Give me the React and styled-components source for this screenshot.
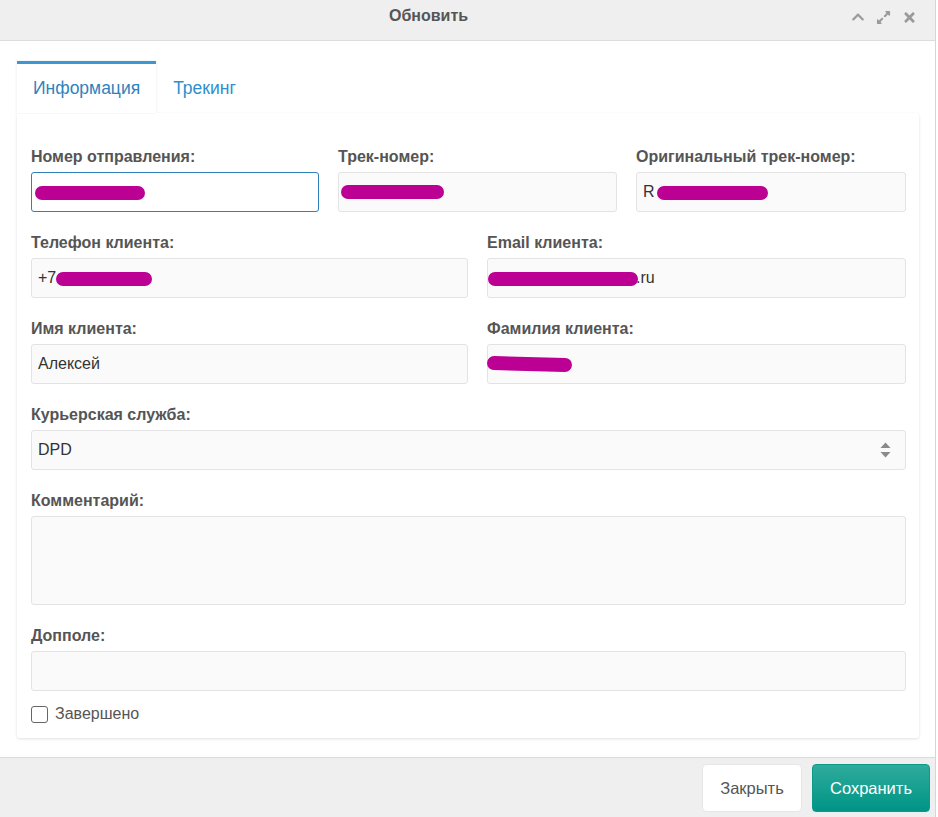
import React from "react";
import styled, { createGlobalStyle } from "styled-components";
import { FaChevronUp, FaExpandAlt, FaTimes } from "react-icons/fa";

const GlobalStyle = createGlobalStyle`
  body {
    margin: 0;
    background: #fff;
    font-family: "Liberation Sans", Arial, sans-serif;
  }
`;

function Field({ label, children }) {
  return (
    <Group>
      <Label>{label}</Label>
      {children}
    </Group>
  );
}

function App() {
  return (
    <>
      <GlobalStyle />
      <Dialog>
        <Header>
          <Title>Обновить</Title>
          <HeaderIcons>
            <FaChevronUp size={14} />
            <FaExpandAlt size={15} />
            <FaTimes size={15} />
          </HeaderIcons>
        </Header>

        <Body>
          <Tabs>
            <Tab active>Информация</Tab>
            <Tab>Трекинг</Tab>
          </Tabs>

          <Panel>
            <Row cols="288px 279px 1fr">
              <Field label="Номер отправления:">
                <Input focused>
                  <Redact left={3} top={13} width={110} />
                </Input>
              </Field>
              <Field label="Трек-номер:">
                <Input>
                  <Redact left={2} top={12} width={103} />
                </Input>
              </Field>
              <Field label="Оригинальный трек-номер:">
                <Input>
                  R
                  <Redact left={20} top={13} width={111} />
                </Input>
              </Field>
            </Row>

            <Row cols="437px 1fr">
              <Field label="Телефон клиента:">
                <Input>
                  +7
                  <Redact left={24} top={13} width={96} />
                </Input>
              </Field>
              <Field label="Email клиента:">
                <Input>
                  <Spacer width={142} />
                  .ru
                  <Redact left={0} top={13} width={150} />
                </Input>
              </Field>
            </Row>

            <Row cols="437px 1fr">
              <Field label="Имя клиента:">
                <Input>Алексей</Input>
              </Field>
              <Field label="Фамилия клиента:">
                <Input>
                  <Redact left={-1} top={12} width={85} tilt />
                </Input>
              </Field>
            </Row>

            <Field label="Курьерская служба:">
              <Select>
                DPD
                <SelectArrows>
                  <svg width="11" height="16" viewBox="0 0 11 16">
                    <path d="M5.5 0.5 L10.5 6 H0.5 Z" fill="#8a8a8a" />
                    <path d="M5.5 15.5 L10.5 10 H0.5 Z" fill="#8a8a8a" />
                  </svg>
                </SelectArrows>
              </Select>
            </Field>

            <Field label="Комментарий:">
              <TextArea />
            </Field>

            <Field label="Допполе:">
              <Input />
            </Field>

            <CheckRow>
              <CheckBox />
              Завершено
            </CheckRow>
          </Panel>
        </Body>

        <Footer>
          <Button>Закрыть</Button>
          <Button primary>Сохранить</Button>
        </Footer>
      </Dialog>
    </>
  );
}

const Dialog = styled.div`
  width: 935px;
  height: 817px;
  display: flex;
  flex-direction: column;
  border-right: 1px solid #d6d6d6;
  background: #fff;
`;

const Header = styled.div`
  height: 40px;
  flex-shrink: 0;
  background: #efefef;
  border-bottom: 1px solid #dcdcdc;
  display: flex;
  align-items: center;
  justify-content: center;
  padding-right: 78px;
  position: relative;
`;

const Title = styled.div`
  font-size: 16px;
  font-weight: bold;
  color: #555;
  margin-top: -8px;
`;

const HeaderIcons = styled.div`
  position: absolute;
  right: 18px;
  top: 10px;
  display: flex;
  gap: 11px;
  color: #9a9a9a;
`;

const Body = styled.div`
  flex: 1;
  min-height: 0;
  padding: 20px 16px 18px 17px;
  display: flex;
  flex-direction: column;
`;

const Tabs = styled.div`
  display: flex;
  height: 52px;
`;

const Tab = styled.div`
  box-sizing: border-box;
  height: 52px;
  padding: 0 16px 0 ${({ active }) => (active ? "16px" : "17px")};
  display: flex;
  align-items: center;
  font-size: 17.5px;
  color: ${({ active }) => (active ? "#2f83bd" : "#2d8fd0")};
  background: ${({ active }) => (active ? "#fff" : "transparent")};
  border-top: 3px solid ${({ active }) => (active ? "#3a97d3" : "transparent")};
  box-shadow: ${({ active }) =>
    active ? "1px 0 2px rgba(0,0,0,0.05), -1px 0 2px rgba(0,0,0,0.05)" : "none"};
  position: relative;
  z-index: 1;
`;

const Panel = styled.div`
  background: #fff;
  border-radius: 0 3px 3px 3px;
  box-shadow: 0 1px 3px rgba(0, 0, 0, 0.12);
  padding: 33px 13px 13px 14px;
`;

const Row = styled.div`
  display: grid;
  grid-template-columns: ${({ cols }) => cols};
  column-gap: 19px;
`;

const Group = styled.div`
  margin-bottom: 20px;
`;

const Label = styled.div`
  font-size: 16px;
  line-height: 21px;
  font-weight: bold;
  color: #555;
  margin-bottom: 5px;
`;

const Input = styled.div`
  box-sizing: border-box;
  height: 40px;
  position: relative;
  display: flex;
  align-items: center;
  padding: 0 6px;
  font-size: 16px;
  color: #333;
  background: ${({ focused }) => (focused ? "#fff" : "#fafafa")};
  border: 1px solid ${({ focused }) => (focused ? "#2f7fba" : "#e3e3e3")};
  border-radius: 3px;
`;

const Spacer = styled.span`
  display: inline-block;
  width: ${({ width }) => width}px;
`;

const Redact = styled.span`
  position: absolute;
  left: ${({ left }) => left}px;
  top: ${({ top }) => top}px;
  width: ${({ width }) => width}px;
  height: 14px;
  border-radius: 7px;
  background: #bb0093;
  transform: ${({ tilt }) => (tilt ? "rotate(1.5deg)" : "none")};
`;

const Select = styled(Input)`
  justify-content: space-between;
`;

const SelectArrows = styled.span`
  display: flex;
  margin-right: 8px;
`;

const TextArea = styled.div`
  height: 89px;
  box-sizing: border-box;
  background: #fafafa;
  border: 1px solid #e3e3e3;
  border-radius: 3px;
`;

const CheckRow = styled.div`
  display: flex;
  align-items: center;
  gap: 7px;
  margin-top: -8px;
  font-size: 16px;
  color: #555;
  height: 22px;
`;

const CheckBox = styled.span`
  box-sizing: border-box;
  width: 17px;
  height: 17px;
  border: 1.5px solid #666;
  border-radius: 3px;
  background: #fff;
`;

const Footer = styled.div`
  height: 60px;
  flex-shrink: 0;
  background: #efefef;
  border-top: 1px solid #dadada;
  display: flex;
  justify-content: flex-end;
  align-items: flex-start;
  gap: 10px;
  padding: 6px 5px 0 0;
  box-sizing: border-box;
`;

const Button = styled.div`
  box-sizing: border-box;
  height: 48px;
  width: ${({ primary }) => (primary ? "118px" : "100px")};
  border-radius: 4px;
  display: flex;
  align-items: center;
  justify-content: center;
  font-size: 16.5px;
  color: ${({ primary }) => (primary ? "#fff" : "#555")};
  background: ${({ primary }) =>
    primary ? "linear-gradient(#2eab9b, #009486)" : "#fff"};
  border: 1px solid ${({ primary }) => (primary ? "#0c998a" : "#e6e6e6")};
`;

export default App;
